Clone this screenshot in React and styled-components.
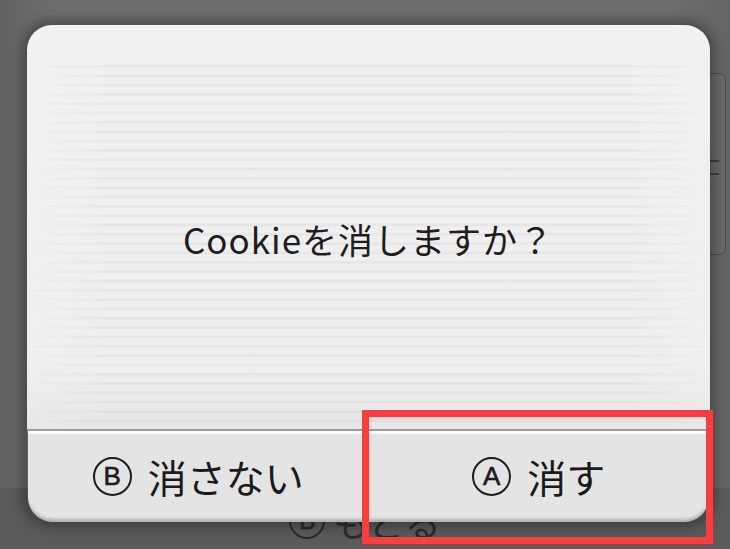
import React from 'react';
import styled, { createGlobalStyle } from 'styled-components';

const Global = createGlobalStyle`
  html, body { margin: 0; padding: 0; }
  body {
    background: #6c6c6c;
    font-family: "Noto Sans CJK JP", "Noto Sans", sans-serif;
    overflow: hidden;
  }
`

const Screen = styled.div`
  position: relative;
  width: 730px;
  height: 549px;
  overflow: hidden;
  display: flex;
  flex-direction: column;
  background: linear-gradient(to right, #626262 0%, #6e6e6e 8%, #6e6e6e 92%, #646464 100%);
`

const Backdrop = styled.div`
  flex: 1;
  display: flex;
  justify-content: flex-end;
  padding-top: 73px;
`

const BackCard = styled.div`
  width: 24px;
  height: 182px;
  margin-right: 4px;
  border: 1px solid #4a4a4a;
  border-radius: 7px;
  background: #6a6a6a;
  display: flex;
  flex-direction: column;
  gap: 11px;
  padding-top: 86px;
  box-sizing: border-box;
`

const Tick = styled.div`
  width: 10px;
  height: 2px;
  margin-left: auto;
  margin-right: 6px;
  background: #3e3e3e;
`

const BottomBar = styled.div`
  height: 61px;
  background: #5a5a5a;
  display: flex;
  align-items: center;
  justify-content: center;
  gap: 8px;
  padding-top: 4px;
  box-sizing: border-box;
  color: #2a2a2a;
  font-size: 36px;
`

const Circled = styled.span`
  display: inline-flex;
  align-items: center;
  justify-content: center;
  width: ${p => p.size}px;
  height: ${p => p.size}px;
  border: 2.5px solid ${p => p.color || '#1c1c1c'};
  border-radius: 50%;
  box-sizing: border-box;
  font-family: "Liberation Sans", "Noto Sans", sans-serif;
  font-size: ${p => Math.round(p.size * 0.66)}px;
  font-weight: 500;
  line-height: 1;
  color: ${p => p.color || '#1c1c1c'};
  -webkit-text-stroke: 0.6px ${p => p.color || '#1c1c1c'};
`

const Dialog = styled.div`
  position: absolute;
  left: 27px;
  top: 25px;
  width: 683px;
  height: 497px;
  border-radius: 25px;
  display: flex;
  flex-direction: column;
  box-shadow: 0 0 12px 5px rgba(0, 0, 0, 0.32);
`

const Body = styled.div`
  position: relative;
  flex: 1;
  display: flex;
  align-items: center;
  justify-content: center;
  padding-top: 22px;
  border-radius: 25px 25px 0 0;
  background: linear-gradient(to bottom, #f1f1f1 0%, #efefef 85%, #e7e7e7 100%);
  border-bottom: 2px solid #9c9c9c;
  overflow: hidden;

  &::before {
    content: '';
    position: absolute;
    inset: 34px 0 0 0;
    background: repeating-linear-gradient(
      to bottom,
      rgba(0, 0, 0, 0) 0px,
      rgba(0, 0, 0, 0) 5.5px,
      rgba(0, 0, 0, 0.035) 6.5px,
      rgba(0, 0, 0, 0.035) 8.3px,
      rgba(0, 0, 0, 0) 9.33px
    );
    -webkit-mask-image: linear-gradient(to right, transparent 0%, #000 12%, #000 88%, transparent 100%);
    mask-image: linear-gradient(to right, transparent 0%, #000 12%, #000 88%, transparent 100%);
  }
`

const Message = styled.p`
  position: relative;
  margin: 0;
  font-size: 35px;
  letter-spacing: 1px;
  color: #1e1e1e;
`

const Footer = styled.div`
  height: 88px;
  display: grid;
  grid-template-columns: 1fr 1fr;
  margin: 0 1px;
  border-top: 3px solid #ffffff;
  border-radius: 0 0 25px 25px;
  background: #e4e4e4;
  box-shadow: inset 0 -5px 3px -2px rgba(0, 0, 0, 0.22);
`

const Choice = styled.button`
  border: none;
  background: transparent;
  display: flex;
  align-items: center;
  justify-content: center;
  gap: 16px;
  padding: 0 0 4px;
  font-family: "Noto Sans CJK JP", "Noto Sans", sans-serif;
  font-size: 39px;
  color: #1a1a1a;
  cursor: pointer;
`

const Highlight = styled.div`
  position: absolute;
  left: 362px;
  top: 410px;
  width: 351px;
  height: 134px;
  border: 7px solid #ff3c3c;
  box-sizing: border-box;
  pointer-events: none;
`

export default function App() {
  return (
    <>
      <Global />
      <Screen>
        <Backdrop>
          <BackCard>
            <Tick />
            <Tick />
          </BackCard>
        </Backdrop>
        <BottomBar>
          <Circled size={36} color="#2a2a2a">B</Circled>
          <span>もどる</span>
        </BottomBar>

        <Dialog>
          <Body>
            <Message>Cookieを消しますか？</Message>
          </Body>
          <Footer>
            <Choice>
              <Circled size={39}>B</Circled>
              <span>消さない</span>
            </Choice>
            <Choice>
              <Circled size={39}>A</Circled>
              <span>消す</span>
            </Choice>
          </Footer>
        </Dialog>

        <Highlight />
      </Screen>
    </>
  );
}
